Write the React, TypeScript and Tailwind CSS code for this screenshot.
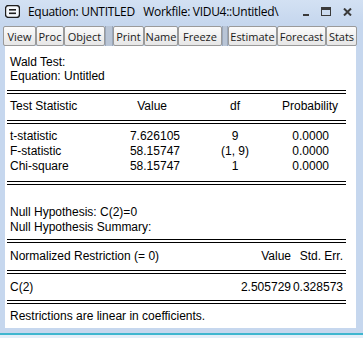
const Btn = (props: { label: string; w: string }) => (
  <div
    className={`${props.w} h-[20px] flex items-center justify-center border border-[#9a9a9a] rounded-[2px] bg-gradient-to-b from-[#fbfbfb] to-[#e6e6e6] text-[11px] text-[#1a1a1a] leading-none`}
  >
    {props.label}
  </div>
);

const Gap = (props: { w: string }) => (
  <div className={`${props.w} h-[20px] bg-[#b9c5d6] border-x border-[#9aa7ba]`}></div>
);

const DoubleLine = () => <div className="h-[4px] border-y border-black ml-[2px] mr-[10px]"></div>;

const App = () => {
  return (
    <div className="w-[363px] h-[338px] bg-[#c6d7ee] flex flex-col overflow-hidden">
      {/* title bar */}
      <div className="h-[23px] flex items-center bg-gradient-to-b from-[#d3e1f3] to-[#c6d7ee] font-['Open_Sans',sans-serif] text-[12px] text-black">
        <svg width="15" height="13" viewBox="0 0 15 13" className="ml-[5px] mr-[8px]">
          <rect x="0.5" y="0.5" width="14" height="12" rx="3" fill="#f4f7fb" stroke="#1e1e1e" strokeWidth="1.4" />
          <rect x="4" y="4" width="7" height="1.6" fill="#1e1e1e" />
          <rect x="4" y="7.5" width="7" height="1.6" fill="#1e1e1e" />
        </svg>
        <span className="whitespace-pre tracking-[-0.3px]">Equation: UNTITLED   Workfile: VIDU4::Untitled\</span>
        <div className="ml-auto flex items-center gap-[12px] mr-[11px]">
          <div className="w-[6px] h-[2px] bg-[#3a3a3a] mt-[6px]"></div>
          <div className="w-[8px] h-[5px] border border-[#3a3a3a] border-t-[3px] box-content"></div>
          <svg width="9" height="8" viewBox="0 0 9 8">
            <path d="M1 0.5 L8 7.5 M8 0.5 L1 7.5" stroke="#3a3a3a" strokeWidth="2" />
          </svg>
        </div>
      </div>
      {/* toolbar */}
      <div className="h-[23px] flex items-start pt-[3px] pl-[3px] font-['Open_Sans',sans-serif]">
        <Btn label="View" w="w-[33px]" />
        <Btn label="Proc" w="w-[28px]" />
        <Btn label="Object" w="w-[41px]" />
        <Gap w="w-[8px]" />
        <Btn label="Print" w="w-[31px]" />
        <Btn label="Name" w="w-[34px]" />
        <Btn label="Freeze" w="w-[44px]" />
        <Gap w="w-[6px]" />
        <Btn label="Estimate" w="w-[49px]" />
        <Btn label="Forecast" w="w-[49px]" />
        <Btn label="Stats" w="w-[31px]" />
      </div>
      {/* output */}
      <div className="ml-[5px] mr-[7px] h-[282px] bg-white font-['Liberation_Sans',Arial,sans-serif] text-[12px] text-black pt-[9px]">
        <div className="pl-[5px] leading-[14px]">
          <div>Wald Test:</div>
          <div>Equation: Untitled</div>
        </div>
        <div className="mt-[7px]"><DoubleLine /></div>
        <div className="flex pl-[5px] leading-[15px] mt-[5px]">
          <div className="w-[110px]">Test Statistic</div>
          <div className="w-[60px] text-right pr-[13px]">Value</div>
          <div className="w-[110px] text-center">df</div>
          <div className="w-[48px] flex justify-end whitespace-nowrap">Probability</div>
        </div>
        <div className="mt-[6px]"><DoubleLine /></div>
        <div className="pl-[5px] leading-[15px] mt-[5px]">
          {[
            ["t-statistic", "7.626105", "9", "0.0000"],
            ["F-statistic", "58.15747", "(1, 9)", "0.0000"],
            ["Chi-square", "58.15747", "1", "0.0000"],
          ].map((r) => (
            <div key={r[0]} className="flex">
              <div className="w-[110px]">{r[0]}</div>
              <div className="w-[60px] text-right">{r[1]}</div>
              <div className="w-[110px] text-center">{r[2]}</div>
              <div className="w-[39px] text-right">{r[3]}</div>
            </div>
          ))}
        </div>
        <div className="mt-[7px]"><DoubleLine /></div>
        <div className="pl-[5px] leading-[15px] mt-[20px]">
          <div>Null Hypothesis: C(2)=0</div>
          <div>Null Hypothesis Summary:</div>
        </div>
        <div className="mt-[4px]"><DoubleLine /></div>
        <div className="flex pl-[5px] leading-[15px] mt-[6px]">
          <div className="w-[223px] whitespace-nowrap">Normalized Restriction (= 0)</div>
          <div className="w-[58px] text-right">Value</div>
          <div className="w-[52px] text-right whitespace-nowrap">Std. Err.</div>
        </div>
        <div className="mt-[6px]"><DoubleLine /></div>
        <div className="flex pl-[5px] leading-[15px] mt-[6px]">
          <div className="w-[223px]">C(2)</div>
          <div className="w-[58px] text-right">2.505729</div>
          <div className="w-[52px] text-right">0.328573</div>
        </div>
        <div className="mt-[5px]"><DoubleLine /></div>
        <div className="pl-[5px] leading-[15px] mt-[5px]">Restrictions are linear in coefficients.</div>
      </div>
      <div className="h-[5px]"></div>
      <div className="h-[2px] bg-[#3fb6cf]"></div>
      <div className="flex-1 bg-[#e3eef8]"></div>
    </div>
  );
};

export default App;
